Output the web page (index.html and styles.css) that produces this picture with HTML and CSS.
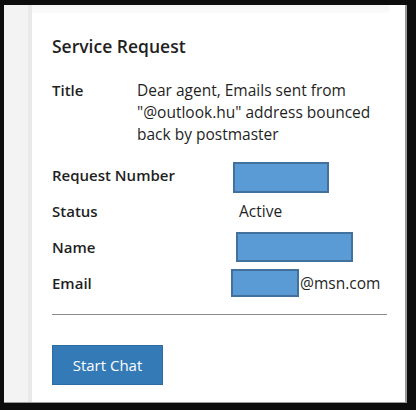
FILE: index.html
```html
<!DOCTYPE html>
<html lang="en">
<head>
    <meta charset="UTF-8">
    <meta name="viewport" content="width=device-width, initial-scale=1.0">
    <title>Service Request</title>
    <link rel="stylesheet" href="styles.css">
</head>
<body>
    <div class="frame">
        <div class="sidebar"></div>
        <div class="panel">
            <div class="topbar"></div>
            <div class="content">
                <h2 class="heading">Service Request</h2>
                <div class="title-row">
                    <span class="label">Title</span>
                    <span class="value">Dear agent, Emails sent from "@outlook.hu" address bounced back by postmaster</span>
                </div>
                <div class="row">
                    <span class="label">Request Number</span>
                    <span class="value"><span class="redact redact-number"></span></span>
                </div>
                <div class="row">
                    <span class="label">Status</span>
                    <span class="value status">Active</span>
                </div>
                <div class="row">
                    <span class="label">Name</span>
                    <span class="value"><span class="redact redact-name"></span></span>
                </div>
                <div class="row">
                    <span class="label">Email</span>
                    <span class="value email"><span class="redact redact-email"></span>@msn.com</span>
                </div>
                <hr class="divider">
                <button class="start">Start Chat</button>
            </div>
        </div>
    </div>
</body>
</html>
```

FILE: styles.css
```css
html, body {
    margin: 0;
    padding: 0;
    background-color: #0d0d0d;
}

body {
    font-family: 'Open Sans', 'Noto Sans', sans-serif;
    color: #1f1f1f;
    padding: 5px 9px 7px 4px;
    height: 410px;
    box-sizing: border-box;
}

.frame {
    display: flex;
    height: 100%;
    background-color: #fff;
    border-right: 2px solid #9a9a9a;
    border-bottom: 1px solid #9a9a9a;
    box-sizing: border-box;
}

.sidebar {
    width: 24px;
    background-color: #f3f3f3;
    border-right: 4px solid #e9e9e9;
    flex-shrink: 0;
}

.panel {
    flex: 1;
    display: flex;
    flex-direction: column;
}

.topbar {
    height: 8px;
    background: linear-gradient(#f6f6f6, #fbfbfb);
    margin-right: 16px;
}

.content {
    padding: 20px 18px 0 20px;
}

.heading {
    font-size: 17.5px;
    font-weight: 600;
    line-height: 26px;
    margin: 0 0 20px 0;
}

.label {
    font-weight: 600;
    font-size: 15px;
}

.value {
    font-size: 15.5px;
}

.title-row {
    display: grid;
    grid-template-columns: 85px 1fr;
    line-height: 22px;
    margin-bottom: 12px;
}

.row {
    display: grid;
    grid-template-columns: 181px 1fr;
    align-items: center;
    height: 36px;
}

.status {
    padding-left: 6px;
}

.redact {
    display: inline-block;
    background-color: #5b9bd5;
    border: 2px solid #41719c;
    box-sizing: border-box;
    vertical-align: middle;
}

.redact-number {
    width: 96px;
    height: 31px;
    margin-top: 4px;
}

.redact-name {
    width: 117px;
    height: 30px;
    margin-left: 3px;
}

.redact-email {
    width: 68px;
    height: 28px;
    margin-left: -2px;
    margin-right: 1px;
}

.email {
    display: flex;
    align-items: center;
}

.divider {
    border: none;
    border-top: 1px solid #8a8a8a;
    margin: 13px 0 30px 0;
}

.start {
    background-color: #337ab7;
    border: 1px solid #2e6da4;
    color: #fff;
    font-family: inherit;
    font-size: 15px;
    width: 111px;
    height: 40px;
    padding: 0;
    cursor: pointer;
}
```
